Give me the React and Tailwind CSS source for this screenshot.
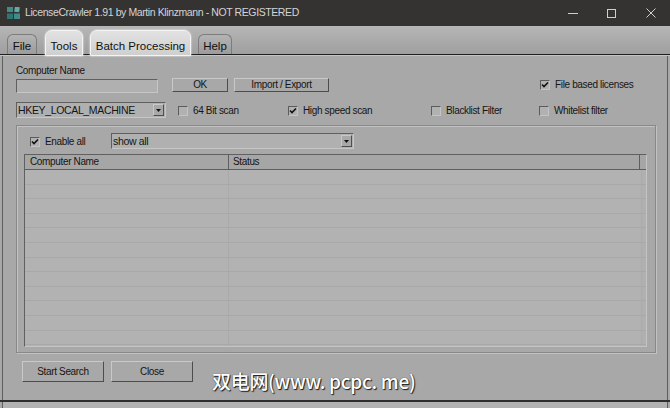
import React from "react"

const ui = "font-['Liberation_Sans',Arial,sans-serif] text-[10px] tracking-[-0.35px] leading-[12px] text-[#151515]"

const Check = ({ checked }) => (
  <span className="flex h-[10px] w-[10px] shrink-0 items-center justify-center border-t border-l border-t-[#5c5c5c] border-l-[#5c5c5c] border-r border-b border-r-[#c4c4c4] border-b-[#c4c4c4] bg-[#b1b1b1]">
    {checked && (
      <svg width="8" height="8" viewBox="0 0 8 8">
        <path d="M1 3.5 L3 5.5 L7 1.5" stroke="#111" strokeWidth="1.6" fill="none" />
      </svg>
    )}
  </span>
)

const CheckLabel = ({ checked, label, className = "" }) => (
  <div className={`flex items-center gap-[5px] ${className}`}>
    <Check checked={checked} />
    <span>{label}</span>
  </div>
)

const Combo = ({ value, className = "" }) => (
  <div className={`flex h-[16px] items-stretch border-t border-l border-t-[#5f5f5f] border-l-[#5f5f5f] border-r border-b border-r-[#c6c6c6] border-b-[#c6c6c6] bg-[#b0b0b0] ${className}`}>
    <span className="flex-1 pl-[1px] text-[10.5px] leading-[14px]">{value}</span>
    <span className="m-[1px] flex w-[11px] items-center justify-center border-t border-l border-t-[#c8c8c8] border-l-[#c8c8c8] border-r border-b border-r-[#4f4f4f] border-b-[#4f4f4f] bg-[#a8a8a8]">
      <svg width="5" height="3" viewBox="0 0 5 3">
        <path d="M0 0 H5 L2.5 3 Z" fill="#111" />
      </svg>
    </span>
  </div>
)

const Button = ({ children, className = "" }) => (
  <div className={`flex items-center justify-center border-t border-l border-t-[#c9c9c9] border-l-[#c9c9c9] border-r border-b border-r-[#4d4d4d] border-b-[#4d4d4d] bg-[#a8a8a8] ${className}`}>
    {children}
  </div>
)

const Tab = ({ label, active, className = "" }) =>
  active ? (
    <div className={`relative z-10 -mb-[2px] flex h-[26px] items-start justify-center rounded-t-[7px] border border-[#f4f4f4] bg-gradient-to-b from-[#e2e2e2] to-[#cfcfcf] pt-[9px] shadow-[0_0_2px_#fff] ${className}`}>
      {label}
    </div>
  ) : (
    <div className={`flex h-[20px] items-start justify-center rounded-t-[6px] border border-b-0 border-[#7c7c7c] bg-gradient-to-b from-[#b4b4b4] to-[#9c9c9c] pt-[5px] ${className}`}>
      {label}
    </div>
  )

export default function App() {
  const rows = Array.from({ length: 13 })
  return (
    <div className="flex h-[408px] w-[670px] flex-col overflow-hidden bg-[#a8a8a8]">
      {/* title bar */}
      <div className="flex h-[26px] shrink-0 items-center bg-[#343332] font-['Liberation_Sans',Arial,sans-serif] text-[10.5px] tracking-[-0.4px] text-[#d4d4d4]">
        <svg className="ml-[7px] mr-[5px]" width="13" height="12" viewBox="0 0 13 12">
          <rect x="0" y="0" width="6" height="5" fill="#3f8c8a" />
          <rect x="7.5" y="0" width="5" height="5" fill="#66aaa5" transform="rotate(8 10 2.5)" />
          <rect x="0" y="6.5" width="6" height="5.5" fill="#2f7574" />
          <rect x="7" y="6.5" width="6" height="5.5" fill="#3f8c8a" />
        </svg>
        <span>LicenseCrawler 1.91 by Martin Klinzmann - NOT REGISTERED</span>
        <div className="ml-auto flex">
          <div className="flex h-[26px] w-[39px] items-center justify-center">
            <div className="h-px w-[10px] bg-[#cfcfcf]" />
          </div>
          <div className="flex h-[26px] w-[39px] items-center justify-center">
            <div className="h-[9px] w-[9px] border border-[#cfcfcf]" />
          </div>
          <div className="flex h-[26px] w-[39px] items-center justify-center">
            <svg width="10" height="10" viewBox="0 0 10 10">
              <path d="M0.5 0.5 L9.5 9.5 M9.5 0.5 L0.5 9.5" stroke="#cfcfcf" strokeWidth="1" />
            </svg>
          </div>
        </div>
      </div>

      {/* tab strip */}
      <div className="flex h-[29px] shrink-0 items-end border-b border-[#1e1e1e] bg-gradient-to-b from-[#b6b6b6] to-[#9f9f9f] pl-[7px] font-['Liberation_Sans',Arial,sans-serif] text-[11.5px] leading-[13px] text-[#111]">
        <Tab label="File" className="w-[30px]" />
        <Tab label="Tools" active className="ml-[8px] w-[38px]" />
        <Tab label="Batch Processing" active className="ml-[7px] w-[101px]" />
        <Tab label="Help" className="ml-[7px] w-[34px]" />
      </div>
      <div className="h-px shrink-0 bg-[#c4c4c4]" />

      {/* body */}
      <div className={`flex flex-1 flex-col border-l border-r border-[#5e5e5e] ml-[2px] mr-[2px] pl-[13px] ${ui}`}>
        <div className="mt-[9px] h-[12px]">Computer Name</div>
        <div className="mt-[1px] flex h-[15px] items-start">
          <div className="mt-[1px] h-[14px] w-[142px] border-t border-l border-t-[#5f5f5f] border-l-[#5f5f5f] border-r border-b border-r-[#c6c6c6] border-b-[#c6c6c6] bg-[#b0b0b0]" />
          <Button className="ml-[14px] h-[14px] w-[56px]">OK</Button>
          <Button className="ml-[6px] h-[14px] w-[95px]">Import / Export</Button>
          <CheckLabel checked label="File based licenses" className="ml-[211px] mt-[1px]" />
        </div>
        <div className="mt-[9px] flex h-[16px] items-center">
          <Combo value="HKEY_LOCAL_MACHINE" className="w-[150px]" />
          <CheckLabel label="64 Bit scan" className="ml-[12px] mt-[2px] w-[110px]" />
          <CheckLabel checked label="High speed scan" className="mt-[2px] w-[143px]" />
          <CheckLabel label="Blacklist Filter" className="mt-[2px] w-[108px]" />
          <CheckLabel label="Whitelist filter" className="mt-[2px]" />
        </div>

        {/* group box */}
        <div className="mt-[7px] flex h-[228px] w-[640px] flex-col border border-[#888] shadow-[inset_1px_1px_0_#c2c2c2,1px_1px_0_#c2c2c2] pl-[7px]">
          <div className="mt-[7px] flex h-[16px] items-center">
            <CheckLabel checked label="Enable all" className="ml-[6px] mt-[1px] w-[81px]" />
            <Combo value="show all" className="w-[243px]" />
          </div>
          <div className="mt-[5px] flex h-[193px] w-[623px] flex-col overflow-hidden border-t border-l border-t-[#606060] border-l-[#606060] border-r border-b border-r-[#c4c4c4] border-b-[#c4c4c4] bg-[#b2b2b2]">
            <div className="flex h-[15px] shrink-0 border-b border-[#5e5e5e] bg-[#a6a6a6]">
              <div className="w-[204px] border-r border-[#5e5e5e] pl-[5px] leading-[14px]">Computer Name</div>
              <div className="w-[411px] border-r border-[#5e5e5e] pl-[4px] leading-[14px]">Status</div>
              <div className="flex-1" />
            </div>
            {rows.map((_, i) => (
              <div key={i} className="flex h-[14.6px] shrink-0 border-b border-[#a8a8a8]">
                <div className="w-[204px] border-r border-[#aaaaaa]" />
                <div className="w-[413px] border-r border-[#aaaaaa]" />
                <div className="flex-1 bg-[#b0b0b0]" />
              </div>
            ))}
          </div>
        </div>

        {/* buttons */}
        <div className="mt-[8px] flex items-start">
          <Button className="ml-[6px] h-[21px] w-[82px]">Start Search</Button>
          <Button className="ml-[7px] h-[21px] w-[82px]">Close</Button>
          <div className="ml-[19px] mt-[9px] font-['Noto_Sans_CJK_SC','Liberation_Sans',sans-serif] text-[19px] font-medium leading-[22px] tracking-[-0.3px] text-white [text-shadow:1px_1px_1px_#1a1a1a,0_0_1px_#333]">
            双电网(www. pcpc. me)
          </div>
        </div>
      </div>
      <div className="h-[2px] shrink-0 bg-[#2e2e2e]" />
      <div className="h-[6px] shrink-0 border-l border-r border-[#5e5e5e] ml-[2px] mr-[2px] bg-[#b2b2b2]" />
    </div>
  )
}
